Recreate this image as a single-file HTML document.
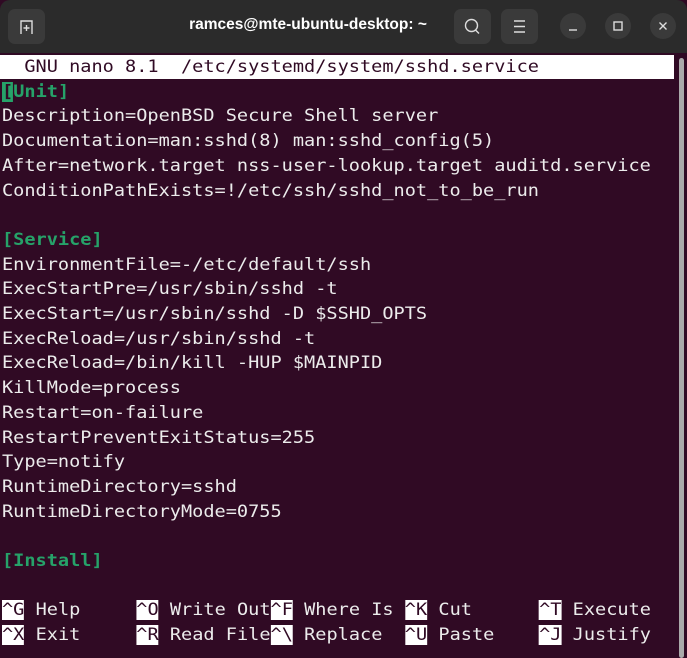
<!DOCTYPE html>
<html><head><meta charset="utf-8"><style>
html,body{margin:0;padding:0;width:687px;height:648px;overflow:hidden;background:#300a24}
.tb{position:absolute;left:0;top:0;width:687px;height:53px;background:#2b2b2b;border-radius:10px 10px 0 0}
.btn{position:absolute;top:9px;width:37px;height:35px;background:#3a3a3a;border-radius:7px}
.circ{position:absolute;top:13px;width:26px;height:26px;border-radius:50%;background:#3a3a3a}
.title{position:absolute;top:16px;left:108px;width:400px;text-align:center;color:#fff;font:bold 15.5px "Liberation Sans",sans-serif}
.term{position:absolute;left:2px;top:55px;width:880px;transform:scaleX(1.093);transform-origin:0 0;font-family:"DejaVu Sans Mono","Liberation Mono",monospace;font-size:17px;line-height:24.7px;color:#ececec;white-space:pre;margin:0}
.hdr{position:absolute;left:0;top:55px;width:674px;height:24px;background:#fff}
.g{color:#26a269;font-weight:bold}
.cur{background:#26a269;color:#300a24}
.k{background:#fff;color:#300a24}
.h{color:#300a24}
.sb{position:absolute;left:679px;top:58px;width:5px;height:600px;background:#aaa;border-radius:3px}
</style></head><body>
<div class="tb"></div>
<div class="btn" style="left:8px"><svg width="37" height="35"><path d="M13 25V12h11v13" fill="none" stroke="#ddd" stroke-width="1.4"/><path d="M18.5 16v6M15.5 19h6" stroke="#ddd" stroke-width="1.4"/></svg></div>
<div class="title">ramces@mte-ubuntu-desktop: ~</div>
<div class="btn" style="left:454px"><svg width="37" height="35"><circle cx="17.5" cy="16.5" r="6" fill="none" stroke="#ddd" stroke-width="1.4"/><path d="M21.5 21l3.5 3.5" stroke="#ddd" stroke-width="1.4"/></svg></div>
<div class="btn" style="left:501px"><svg width="37" height="35"><path d="M13 12h11M13 17.5h11M13 23h11" stroke="#ddd" stroke-width="1.4"/></svg></div>
<div class="circ" style="left:560px"><svg width="26" height="26"><path d="M9 17h8" stroke="#ddd" stroke-width="1.4"/></svg></div>
<div class="circ" style="left:605px"><svg width="26" height="26"><rect x="9" y="9" width="8" height="8" fill="none" stroke="#ddd" stroke-width="1.4"/></svg></div>
<div class="circ" style="left:650px"><svg width="26" height="26"><path d="M9.5 9.5l7 7M16.5 9.5l-7 7" stroke="#ddd" stroke-width="1.4"/></svg></div>
<div class="hdr"></div>
<div class="sb"></div>
<pre class="term"><span class="h">  GNU nano 8.1  /etc/systemd/system/sshd.service</span>
<span class="g"><span class="cur">[</span>Unit]</span>
Description=OpenBSD Secure Shell server
Documentation=man:sshd(8) man:sshd_config(5)
After=network.target nss-user-lookup.target auditd.service
ConditionPathExists=!/etc/ssh/sshd_not_to_be_run

<span class="g">[Service]</span>
EnvironmentFile=-/etc/default/ssh
ExecStartPre=/usr/sbin/sshd -t
ExecStart=/usr/sbin/sshd -D $SSHD_OPTS
ExecReload=/usr/sbin/sshd -t
ExecReload=/bin/kill -HUP $MAINPID
KillMode=process
Restart=on-failure
RestartPreventExitStatus=255
Type=notify
RuntimeDirectory=sshd
RuntimeDirectoryMode=0755

<span class="g">[Install]</span>

<span class="k">^G</span> Help     <span class="k">^O</span> Write Out<span class="k">^F</span> Where Is <span class="k">^K</span> Cut      <span class="k">^T</span> Execute
<span class="k">^X</span> Exit     <span class="k">^R</span> Read File<span class="k">^\</span> Replace  <span class="k">^U</span> Paste    <span class="k">^J</span> Justify</pre>
</body></html>
